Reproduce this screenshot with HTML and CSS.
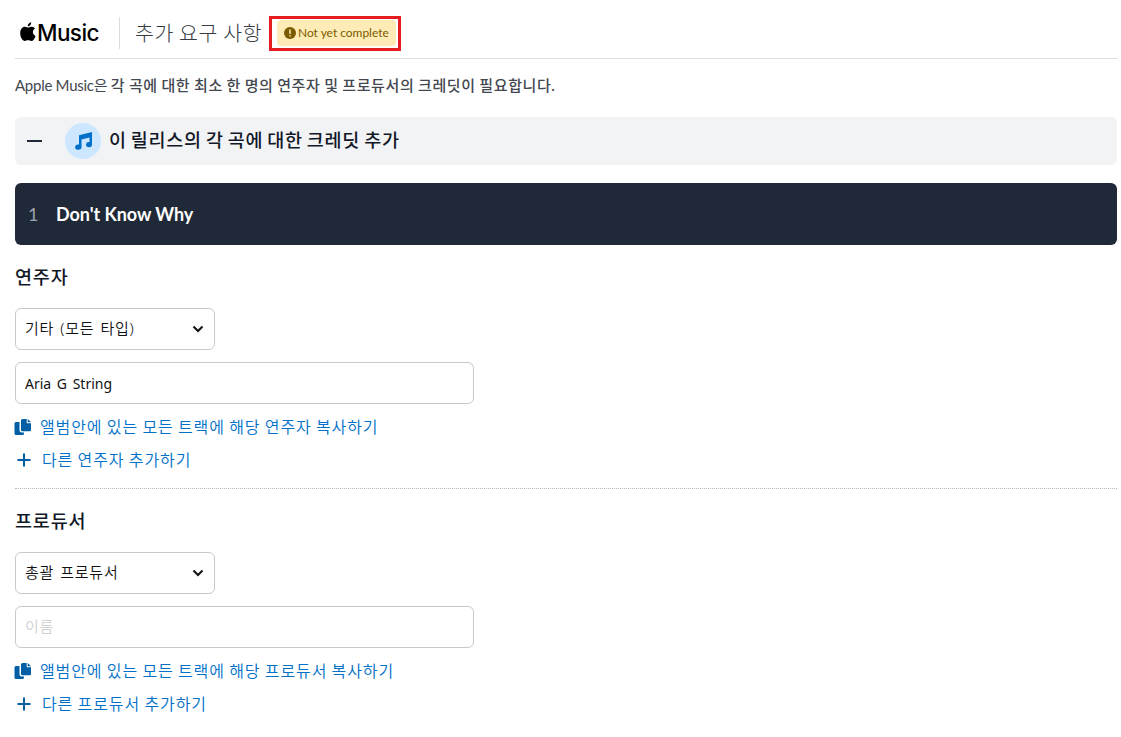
FILE: index.html
```html
<!DOCTYPE html>
<html lang="ko">
<head>
<meta charset="utf-8">
<title>Apple Music 추가 요구 사항</title>
<link rel="stylesheet" href="styles.css">
</head>
<body>
<svg class="defs" aria-hidden="true">
  <symbol id="copy" viewBox="0 0 18 18"><path d="M2 4H5.5V12Q5.5 14.5 8 14.5H10V15.5Q10 17 8.500 17H2Q.5 17 .5 15.500V5.500Q.5 4 2 4Z"/><path d="M8.500 1H12.700V5.300H17V12Q17 13.300 15.700 13.300H8.300Q7 13.300 7 12V2.500Q7 1 8.500 1Z"/><path d="M13.700 1L17 4.300H13.700Z"/></symbol>
  <symbol id="plus" viewBox="0 0 14 14"><path d="M7 .5V13.500M.5 7H13.500" fill="none" stroke="currentColor" stroke-width="2"/></symbol>
  <symbol id="chevron" viewBox="0 0 12 8"><path d="M1.500 1.500L6 6L10.500 1.500" fill="none" stroke="currentColor" stroke-width="2"/></symbol>
</svg>
<main class="page">
  <header class="header">
    <div class="brand">
      <svg class="apple" viewBox="0 0 16 20" preserveAspectRatio="none"><path d="M11.200 .3C11.400 2.500 9.700 4.500 7.700 4.500C7.500 2.500 9.300 .5 11.200 .3ZM8 5.600C8.800 5.600 9.900 4.600 11.600 4.700C13.100 4.800 14.300 5.400 15 6.500C11.900 8.500 12.500 12.700 15.600 13.900C14.800 16.300 13.200 19 11.400 19C10.100 19 9.600 18.300 8.100 18.300C6.600 18.300 6.100 19 4.800 19C2.500 19 .2 15 .2 11.200C.2 7.300 2.300 4.700 5 4.700C6.400 4.700 7.300 5.600 8 5.600Z"/></svg>
      <span class="brand-name">Music</span>
    </div>
    <h1 class="title">추가 요구 사항</h1>
    <div class="highlight"><span class="status"><svg class="alert" viewBox="0 0 12 12"><circle cx="6" cy="6" r="6"/><path d="M6 2.500V7M6 8.200V9.600" stroke="#ffebb5" stroke-width="1.500"/></svg>Not yet complete</span></div>
  </header>
  <p class="intro">Apple Music은 <b>각 곡에 대한 최소 한 명의 연주자 및 프로듀서의 크레딧이 필요합니다.</b></p>
  <section class="accordion">
    <span class="minus"></span>
    <span class="note"><svg viewBox="0 0 20 20"><path d="M6 4.200L19 1V13.500A3 2.600 0 1 1 16.500 11V6.500L8.500 8.500V16A3.200 2.600 0 1 1 6 13.500Z"/></svg></span>
    <h2 class="accordion-title">이 릴리스의 각 곡에 대한 크레딧 추가</h2>
  </section>
  <div class="track"><span class="number">1</span><span class="song">Don't Know Why</span></div>
  <section class="group">
    <h3 class="heading">연주자</h3>
    <div class="select"><span>기타 (모든 타입)</span><svg><use href="#chevron"/></svg></div>
    <div class="input">Aria G String</div>
    <div class="action copy"><svg><use href="#copy"/></svg><a>앨범안에 있는 모든 트랙에 해당 연주자 복사하기</a></div>
    <div class="action add"><svg><use href="#plus"/></svg><a>다른 연주자 추가하기</a></div>
  </section>
  <section class="group divided">
    <h3 class="heading">프로듀서</h3>
    <div class="select"><span>총괄 프로듀서</span><svg><use href="#chevron"/></svg></div>
    <div class="input placeholder">이름</div>
    <div class="action copy"><svg><use href="#copy"/></svg><a>앨범안에 있는 모든 트랙에 해당 프로듀서 복사하기</a></div>
    <div class="action add"><svg><use href="#plus"/></svg><a>다른 프로듀서 추가하기</a></div>
  </section>
</main>
</body>
</html>
```

FILE: styles.css
```css
* { box-sizing: border-box; }
body { margin: 0; background: #fff; font-family: Lato, "Noto Sans CJK KR", sans-serif; color: #111827; }
h1, h2, h3, p { margin: 0; }
.defs { display: none; }
.page { padding: 0 4px 0 15px; }
.header { height: 59px; border-bottom: 1px solid #dcdcdc; display: flex; align-items: center; padding-top: 8px; }
.brand { display: flex; align-items: center; width: 105px; height: 32px; padding-left: 5px; border-right: 1px solid #dcdcdc; color: #000; }
.apple { width: 16px; height: 20px; margin-top: -2px; }
.brand-name { font: 500 22.5px/30px Inter, sans-serif; letter-spacing: -.6px; margin: -1px 0 0 1px; }
.title { margin-left: 15px; width: 134px; white-space: nowrap; font-size: 20.5px; line-height: 32px; font-weight: 300; letter-spacing: .6px; word-spacing: -1px; color: #363b43; }
.highlight { width: 132px; height: 35px; border: 3px solid #e51c20; display: flex; align-items: center; padding-left: 5px; }
.status { width: 119px; height: 26px; border-radius: 4px; background: #ffebb5; color: #7a5b00; font-size: 12px; display: flex; align-items: center; padding: 0 0 1px 7px; white-space: nowrap; letter-spacing: -.03px; }
.alert { width: 12px; height: 12px; fill: #7a5b00; margin-right: 2px; }
.intro { height: 58px; padding-top: 14px; font-size: 15px; line-height: 24px; color: #43474f; white-space: nowrap; letter-spacing: -.27px; }
.intro b { font-weight: 500; letter-spacing: .6px; word-spacing: -.65px; }
.accordion { height: 48px; border-radius: 6px; background: #f2f3f5; display: flex; align-items: center; padding-left: 12px; }
.minus { width: 15px; height: 2px; background: #1f2937; }
.note { width: 36px; height: 36px; border-radius: 50%; background: #cce7ff; margin-left: 23px; display: flex; align-items: center; justify-content: center; }
.note svg { width: 20px; height: 20px; fill: #0070c9; }
.accordion-title { margin: -2px 0 0 8px; font-size: 18.5px; line-height: 28px; font-weight: 500; white-space: nowrap; letter-spacing: .75px; word-spacing: -1.4px; }
.track { margin-top: 18px; height: 62px; border-radius: 6px; background: #202938; color: #fff; display: flex; align-items: center; padding-left: 13px; font-size: 18px; }
.number { width: 28px; color: #9ca3af; }
.song { font-weight: 700; letter-spacing: -.04px; }
.group { height: 244px; padding-top: 18px; }
.divided { border-top: 1px dotted #b8b8b8; margin-top: -1px; height: 245px; }
.heading { height: 45px; font-size: 18.5px; line-height: 28px; font-weight: 500; letter-spacing: .8px; }
.select, .input { height: 42px; border: 1px solid #c9c9c9; border-radius: 6px; padding: 0 9px; display: flex; align-items: center; font: 350 15px/24px "Noto Sans", "Noto Sans CJK KR", sans-serif; color: #111; white-space: nowrap; }
.select { width: 200px; justify-content: space-between; letter-spacing: .75px; word-spacing: 1.5px; padding-bottom: 3px; }
.select svg { width: 12px; height: 8px; margin: 2px 1px 0 0; }
.input { width: 459px; margin-top: 12px; font-size: 14px; font-weight: 400; word-spacing: 2px; padding-top: 1px; }
.placeholder { color: #d1d1d1; font-size: 15px; font-weight: 350; letter-spacing: .6px; padding-top: 0; padding-bottom: 2px; }
.action { display: flex; align-items: center; height: 33px; color: #0070c9; font-size: 16px; line-height: 24px; font-weight: 350; letter-spacing: .9px; word-spacing: -.9px; white-space: nowrap; }
.copy { margin-top: 6px; }
.action svg { color: #005ea5; fill: currentColor; }
.copy svg { width: 18px; height: 18px; margin-right: 7px; margin-left: -1px; }
.copy a { margin-left: 1px; }
.add svg { width: 14px; height: 14px; margin-left: 2px; margin-right: 11px; }
```
